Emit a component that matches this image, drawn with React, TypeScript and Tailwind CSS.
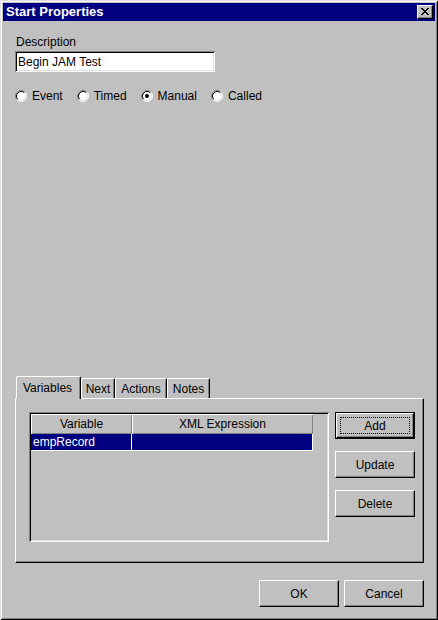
import React from 'react';

const raised =
  'border border-t-white border-l-white border-r-black border-b-black shadow-[inset_-1px_-1px_0_#808080]';
const sunken =
  'shadow-[inset_1px_1px_0_#808080,inset_-1px_-1px_0_#ffffff,inset_2px_2px_0_#000000,inset_-2px_-2px_0_#dfdfdf]';

function CloseButton() {
  return (
    <div className={`w-[16px] h-[14px] bg-[#c0c0c0] flex items-center justify-center ${raised}`}>
      <svg width="8" height="7" viewBox="0 0 8 7" shapeRendering="crispEdges" className="mt-[-1px]">
        <path
          fill="#000"
          d="M0 0h2v1H0z M6 0h2v1H6z M1 1h2v1H1z M5 1h2v1H5z M2 2h4v1H2z M3 3h2v1H3z M2 4h4v1H2z M1 5h2v1H1z M5 5h2v1H5z M0 6h2v1H0z M6 6h2v1H6z"
        />
      </svg>
    </div>
  );
}

function Radio({ label, checked }: { label: string; checked?: boolean }) {
  return (
    <div className="flex items-center gap-[5px]">
      <svg width="12" height="12" viewBox="0 0 12 12">
        <circle cx="6" cy="6" r="5" fill="#fff" />
        <path d="M2.11 9.89A5.5 5.5 0 0 1 9.89 2.11" fill="none" stroke="#808080" strokeWidth="1" />
        <path d="M9.89 2.11A5.5 5.5 0 0 1 2.11 9.89" fill="none" stroke="#ffffff" strokeWidth="1" />
        <path d="M2.82 9.18A4.5 4.5 0 0 1 9.18 2.82" fill="none" stroke="#000000" strokeWidth="1" />
        <path d="M9.18 2.82A4.5 4.5 0 0 1 2.82 9.18" fill="none" stroke="#dfdfdf" strokeWidth="1" />
        {checked && <circle cx="6" cy="6" r="2" fill="#000" />}
      </svg>
      <span>{label}</span>
    </div>
  );
}

function Button({ label, isDefault }: { label: string; isDefault?: boolean }) {
  if (isDefault) {
    return (
      <div className="w-[80px] h-[27px] shrink-0 border border-black">
        <div className={`relative w-full h-full bg-[#c0c0c0] flex items-center justify-center ${raised}`}>
          <span>{label}</span>
          <div className="absolute inset-[3px] border border-dotted border-black" />
        </div>
      </div>
    );
  }
  return (
    <div className={`w-[80px] h-[27px] shrink-0 bg-[#c0c0c0] flex items-center justify-center ${raised}`}>
      <span>{label}</span>
    </div>
  );
}

function Tab({ label, width, active }: { label: string; width: number; active?: boolean }) {
  return (
    <div
      style={{ width }}
      className={
        active
          ? 'relative z-10 h-[23px] mb-[-1px] bg-[#c0c0c0] rounded-t-[2px] border-t border-l border-r border-t-white border-l-white border-r-black shadow-[inset_-1px_0_0_#808080] flex justify-center pt-[4px] pr-[2px]'
          : 'h-[20px] bg-[#c0c0c0] rounded-t-[2px] border-t border-l border-r border-t-white border-l-white border-r-black shadow-[inset_-1px_0_0_#808080] flex justify-center pt-[3px]'
      }
    >
      {label}
    </div>
  );
}

export default function App() {
  return (
    <div className="w-[438px] h-[620px] bg-[#c0c0c0] p-[3px] flex flex-col text-black text-[12px] leading-[14px] font-['Liberation_Sans',Arial,sans-serif] shadow-[inset_1px_1px_0_#dfdfdf,inset_-1px_-1px_0_#000000,inset_2px_2px_0_#ffffff,inset_-2px_-2px_0_#808080]">
      {/* title bar */}
      <div className="h-[18px] bg-[#000080] flex items-center justify-between pl-[3px] pr-[2px]">
        <span className="text-white font-bold text-[13px] leading-[16px]">Start Properties</span>
        <CloseButton />
      </div>

      <div className="flex flex-col pl-[12px] pr-[11px]">
        <div className="mt-[14px] pl-[1px]">Description</div>
        <div className={`mt-[2px] w-[200px] h-[21px] bg-white flex items-center pl-[3px] ${sunken}`}>
          Begin JAM Test
        </div>

        <div className="mt-[18px] h-[12px] flex items-center gap-[14px]">
          <Radio label="Event" />
          <Radio label="Timed" />
          <Radio label="Manual" checked />
          <Radio label="Called" />
        </div>

        {/* tabs */}
        <div className="mt-[274px] h-[22px] flex items-end pl-[1px]">
          <Tab label="Variables" width={65} active />
          <Tab label="Next" width={34} />
          <Tab label="Actions" width={52} />
          <Tab label="Notes" width={43} />
        </div>
        <div className="h-[165px] border border-t-white border-l-white border-r-black border-b-black shadow-[inset_-1px_-1px_0_#808080] pl-[13px] pt-[13px] pr-[8px] flex gap-[6px]">
          <div className={`w-[300px] h-[130px] shrink-0 p-[2px] ${sunken}`}>
            <div className="flex h-[20px]">
              <div className="w-[101px] flex items-center justify-center shadow-[inset_1px_1px_0_#ffffff,inset_-1px_-1px_0_#808080]">
                Variable
              </div>
              <div className="w-[181px] flex items-center justify-center shadow-[inset_1px_1px_0_#ffffff,inset_-1px_-1px_0_#808080]">
                XML Expression
              </div>
            </div>
            <div className="flex h-[17px] text-white">
              <div className="w-[101px] bg-[#000080] border-r border-b border-white flex items-center pl-[2px]">
                empRecord
              </div>
              <div className="w-[181px] bg-[#000080] border-r border-b border-white" />
            </div>
          </div>
          <div className="flex flex-col">
            <Button label="Add" isDefault />
            <div className="mt-[12px]">
              <Button label="Update" />
            </div>
            <div className="mt-[12px]">
              <Button label="Delete" />
            </div>
          </div>
        </div>

        <div className="mt-[17px] flex justify-end gap-[5px]">
          <Button label="OK" />
          <Button label="Cancel" />
        </div>
      </div>
    </div>
  );
}
